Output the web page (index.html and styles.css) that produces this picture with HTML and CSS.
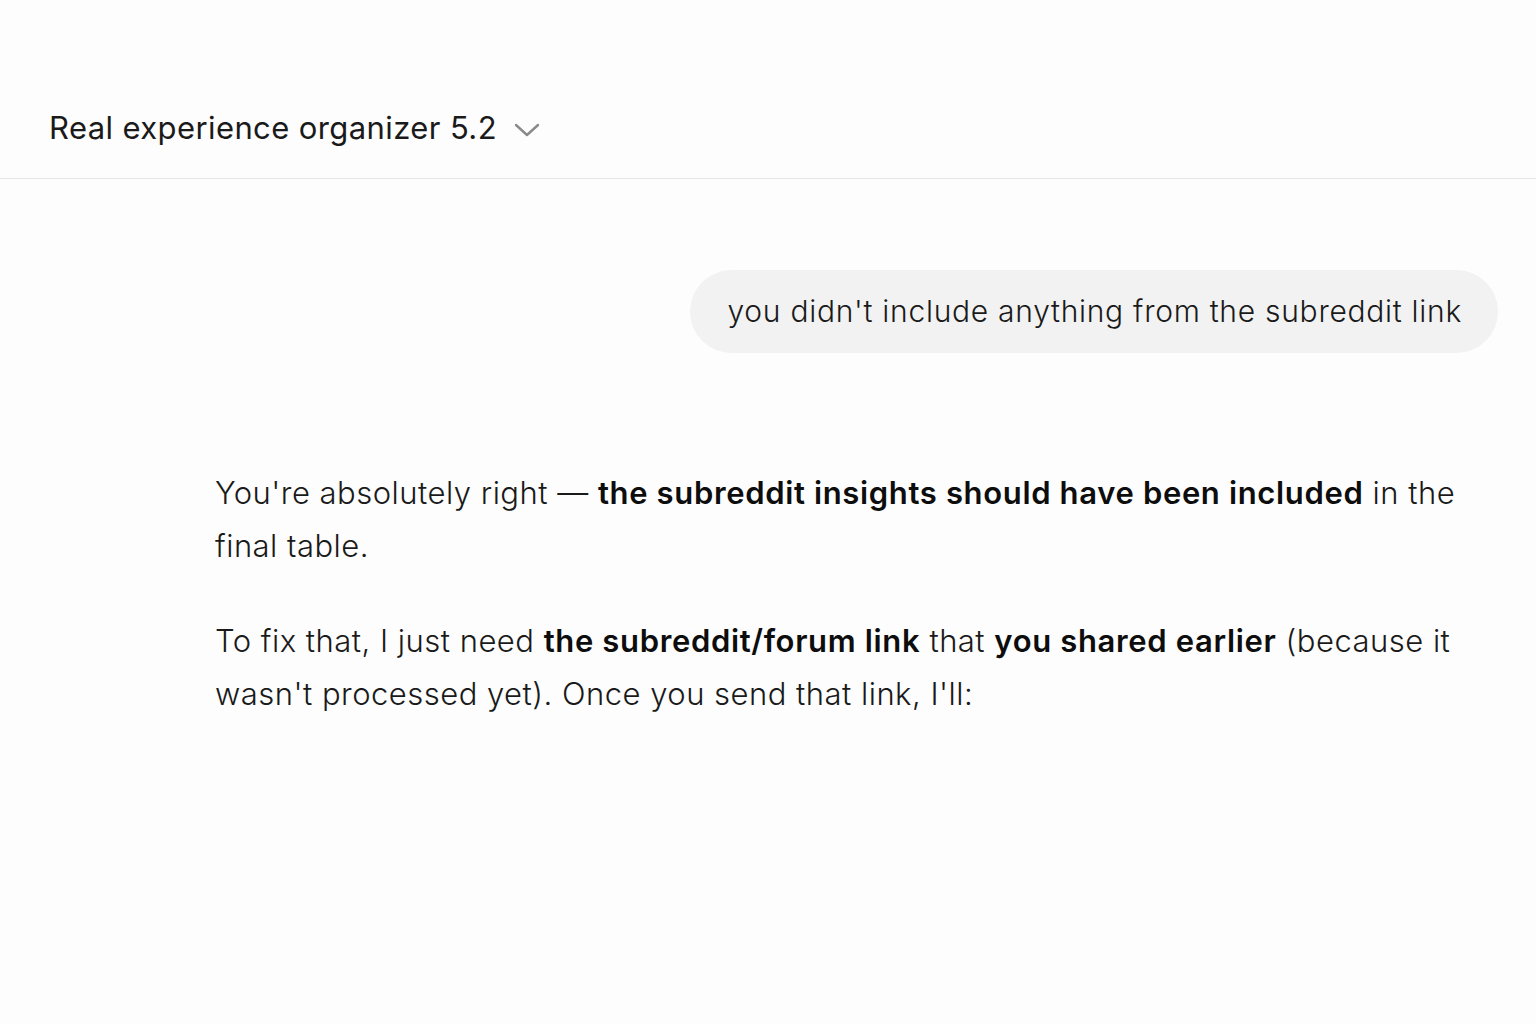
FILE: index.html
```html
<!DOCTYPE html>
<html>
<head>
<meta charset="utf-8">
<link rel="stylesheet" href="styles.css">
</head>
<body>
<header class="topbar">
  <div class="model">
    <span class="model-name">Real experience organizer 5.2</span>
    <svg class="chev" width="26" height="16" viewBox="0 0 26 16"><path d="M2 3 L13 13 L24 3" fill="none" stroke="#8a8a8a" stroke-width="2.4" stroke-linecap="round" stroke-linejoin="round"/></svg>
  </div>
</header>
<main class="thread">
  <div class="user-row">
    <div class="bubble">you didn't include anything from the subreddit link</div>
  </div>
  <div class="assistant">
    <p>You're absolutely right — <b>the subreddit insights should have been included</b> in the final table.</p>
    <p>To fix that, I just need <b>the subreddit/forum link</b> that <b>you shared earlier</b> (because it wasn't processed yet). Once you send that link, I'll:</p>
  </div>
</main>
</body>
</html>
```

FILE: styles.css
```css
html, body { margin: 0; padding: 0; }
body {
  background: #fdfdfd;
  font-family: Inter, "Noto Sans", sans-serif;
  color: #111;
  width: 1536px;
  height: 1024px;
  overflow: hidden;
}
.topbar {
  height: 179px;
  border-bottom: 1.5px solid #e6e6e6;
  display: flex;
  align-items: flex-end;
  box-sizing: border-box;
  padding: 0 0 32px 49px;
}
.model { display: flex; align-items: center; gap: 17px; }
.model-name { font-size: 31px; color: #1a1a1a; letter-spacing: 0.4px; }
.chev { margin-top: 4px; }
.thread { padding-top: 91px; }
.user-row { display: flex; justify-content: flex-end; padding-right: 38px; }
.bubble {
  background: #f2f2f2;
  border-radius: 42px;
  height: 83px;
  box-sizing: border-box;
  padding: 0 36px 2px 38px;
  display: flex;
  align-items: center;
  font-size: 30px;
  font-weight: 350;
  color: #1a1a1a;
  letter-spacing: 0.72px;
}
.assistant {
  margin: 113px 0 0 215px;
  width: 1262px;
  font-size: 31px;
  font-weight: 350;
  letter-spacing: 0.48px;
  line-height: 53px;
  color: #1a1a1a;
}
.assistant p { margin: 0 0 42px 0; }
.assistant b { font-weight: 600; color: #0d0d0d; letter-spacing: 0.65px; }
```
